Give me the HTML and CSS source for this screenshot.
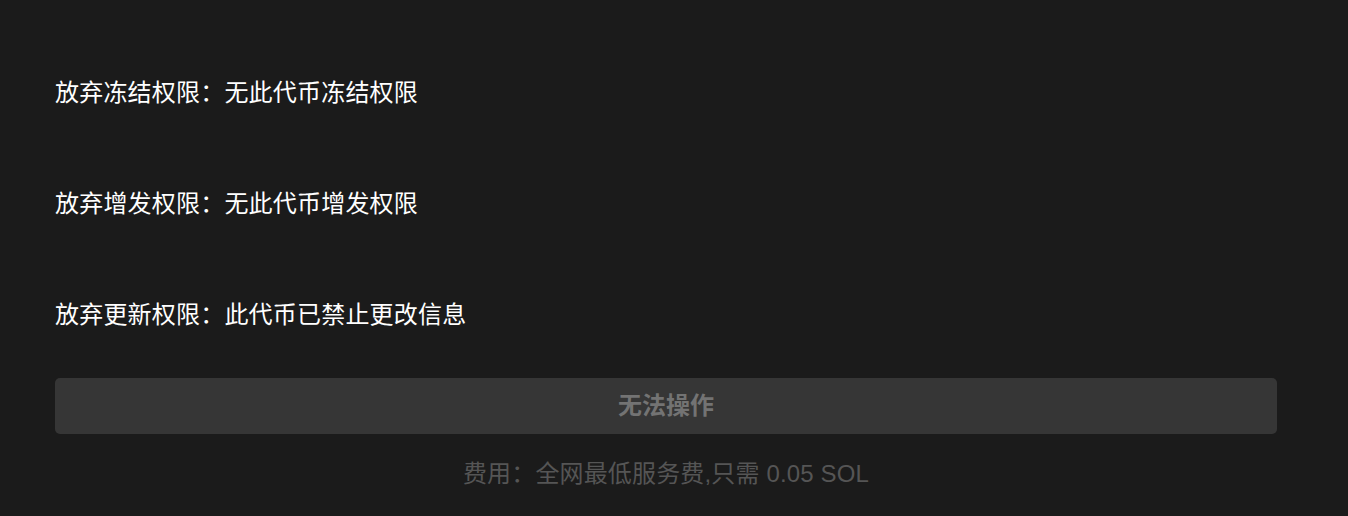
FILE: index.html
```html
<!DOCTYPE html>
<html lang="zh-CN">
<head>
<meta charset="utf-8">
<link rel="stylesheet" href="styles.css">
</head>
<body>
<div class="panel">
  <div class="rows">
    <div class="row">放弃冻结权限：无此代币冻结权限</div>
    <div class="row">放弃增发权限：无此代币增发权限</div>
    <div class="row">放弃更新权限：此代币已禁止更改信息</div>
  </div>
  <button class="action" disabled>无法操作</button>
  <div class="fee">费用：全网最低服务费,只需 0.05 SOL</div>
</div>
</body>
</html>
```

FILE: styles.css
```css
html, body {
  margin: 0;
  padding: 0;
  background: #1b1b1b;
}
body {
  font-family: "Noto Sans CJK SC", "Liberation Sans", sans-serif;
  width: 1348px;
  height: 516px;
  overflow: hidden;
}
.panel {
  padding: 0 71px 0 55px;
  display: flex;
  flex-direction: column;
}
.rows {
  display: flex;
  flex-direction: column;
  padding-top: 35px;
}
.row {
  height: 111px;
  line-height: 111px;
  color: #ffffff;
  font-size: 24px;
  letter-spacing: 0.2px;
}
.action {
  margin-top: 10px;
  height: 56px;
  padding: 0 0 5px 0;
  border: none;
  border-radius: 5px;
  background: #363636;
  color: #737373;
  font-family: "Liberation Sans", "Noto Sans CJK SC", sans-serif;
  font-size: 24px;
  font-weight: bold;
  width: 100%;
}
.fee {
  margin-top: 24px;
  line-height: 32px;
  text-align: center;
  color: #555555;
  font-size: 24px;
  letter-spacing: 0.15px;
  font-family: "Liberation Sans", "Noto Sans CJK SC", sans-serif;
}
```
